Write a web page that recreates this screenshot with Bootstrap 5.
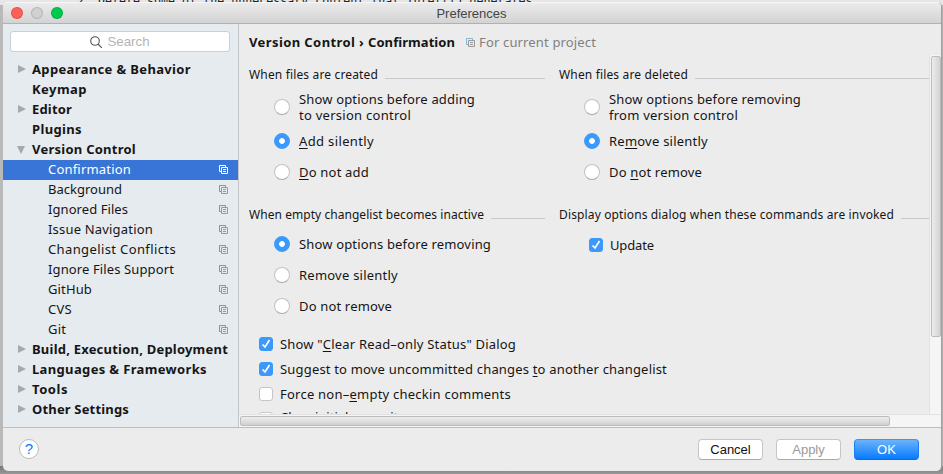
<!DOCTYPE html>
<html lang="en">
<head>
<meta charset="utf-8">
<title>Preferences</title>
<link href="https://cdn.jsdelivr.net/npm/bootstrap@5.3.0/dist/css/bootstrap.min.css" rel="stylesheet">
<style>
body{width:943px;height:474px;overflow:hidden;background:#b4b4b4;color:#151515;font:13px/16px "Noto Sans",sans-serif}
.backdrop{position:absolute;inset:0;overflow:hidden;background:linear-gradient(90deg,#b9b9b9 0 940px,#b0b0b0 940px)}
.backdrop .code{height:12px;margin-top:-7px;padding-left:77px;background:#e6e6e6;font:11.650px/16px "DejaVu Sans Mono",monospace;color:#222;white-space:pre}
.backdrop .foot{position:absolute;left:0;right:0;bottom:0;height:8px;background:linear-gradient(#777,#999)}
.window{position:relative;margin:2px 0 0 3px;width:939px;height:469px;border-radius:5px;background:#ececec;overflow:hidden;border-right:1px solid #a0a0a0}
.titlebar{height:22px;border-bottom:1px solid #b1b1b1;background:linear-gradient(#ebebeb,#d3d3d3);border-top:1px solid #f6f6f6}
.lights{position:absolute;left:8px;top:5px;gap:8px}
.dot{width:12px;height:12px;border-radius:50%;border:1px solid #0002}
.dot.close-dot{background:#ff5f57}
.dot.min-dot{background:#d0d0d0}
.dot.max-dot{background:#00ca4e}
.wintitle{font:13px/21px "Liberation Sans",sans-serif;color:#444;margin-right:1px}
.panes{height:403px}
.side{width:236px;background:#e6ebf0;border-right:1px solid #c2c4c6}
.find{margin:7px 7px 8px;height:21px;width:220px;background:#fff;border:1px solid #cbd0d4;border-radius:3px;font:13.300px/19px "Liberation Sans",sans-serif;color:#b4b4b4;gap:5px}
.tree-row{height:20px;padding-left:29px;padding-bottom:2px;position:relative;white-space:nowrap;line-height:18px}
.tree-row.top{font-weight:700}
.tree-row.sub{padding-left:45px;padding-right:10px}
.tree-row.sel{background:#3875d7;color:#fff}
.tree-row.closed::before,.tree-row.open::before{content:"";position:absolute}
.tree-row.closed::before{left:15px;top:5px;border-left:8px solid #a9a9a9;border-top:4px solid transparent;border-bottom:4px solid transparent}
.tree-row.open::before{left:14px;top:6px;border-top:8px solid #a9a9a9;border-left:4px solid transparent;border-right:4px solid transparent}
.ico{width:9px;height:9px;flex:none;margin-top:1px;--a:#6c9db5;--b:#999}
.sel .ico{--a:#fff;--b:#fff}
.main-pane{width:702px}
.crumb{height:31px;padding:10px 0 0 10px;white-space:nowrap}
.crumb .ico{margin:4px 4px 0 11px;--a:#7fb9d6}
.crumb .note{color:#808080}
.scroller{height:359px;overflow:hidden}
.view{width:690px;height:359px;overflow:hidden;padding:8px 0 0 10px}
.groups{display:grid;grid-template-columns:296px 370px;column-gap:14px;grid-template-rows:140px 128px}
.group-head{height:20px;padding-top:4px;margin-bottom:5px;white-space:nowrap;gap:7px}
.group-head span{font-size:12px}
.rule{height:1px;background:#c9c9c9;margin-top:6px}
.opt{padding-left:25px;gap:9px;height:31px;white-space:nowrap}
.opt.tall{height:37px}
.opt.upd{padding:2px 0 0 30px;gap:7px}
.rad{width:16px;height:16px;border-radius:50%;background:#fff;border:1px solid #c2c2c2;border-bottom-color:#a8a8a8;flex:none}
.rad.on{background:radial-gradient(circle,#fff 0 2.5px,#3b99fc 3.2px);border-color:#3b99fc}
.chk{width:14px;height:14px;border-radius:3px;background:#fff;border:1px solid #c6c6c6;flex:none}
.chk.on{background:#3b99fc;border-color:#3b99fc}
.chk svg{display:block;width:12px;height:12px}
.flags{padding-left:10px}
.flag{height:25px;gap:7px;white-space:nowrap}
.flag:last-child span{padding-bottom:3px}
u{text-underline-offset:2px;text-decoration-thickness:1px;text-decoration-skip-ink:none}
.vbar{width:12px;height:359px;background:#f5f5f5;border-left:1px solid #e2e2e2;padding:1px 0 0 1px}
.vthumb{width:10px;height:281px;border:1px solid #bcbcbc;border-radius:2px;background:linear-gradient(90deg,#ededed,#d2d2d2)}
.hbar{height:13px;background:#f5f5f5;border-top:1px solid #e2e2e2;padding:1px 0 0 1px}
.hthumb{width:650px;height:10px;border:1px solid #bcbcbc;border-radius:2px;background:linear-gradient(#ededed,#d0d0d0)}
.footer{height:44px;border-top:1px solid #bdbdbd;padding:0 22px 1px 16px}
.help{width:20px;height:20px;border-radius:50%;background:#fff;border:1px solid #bbb;color:#0a7bff;font:15px/18px "Liberation Sans",sans-serif}
.pushes{gap:13px}
.push{width:65px;height:21px;padding:0;border:1px solid #c6c6c6;border-bottom-color:#aaa;border-radius:4px;background:#fff;font:13px/19px "Liberation Sans",sans-serif;color:#111}
.push.dim{color:#999}
.push.go{background:linear-gradient(#6bb3fa,#077aff);border-color:#3e93f5 #1a7df0 #0a69e5;color:#fff}
</style>
<script src="https://cdn.jsdelivr.net/npm/bootstrap@5.3.0/dist/js/bootstrap.bundle.min.js"></script>
</head>
<body>
<svg class="d-none"><symbol id="copy" viewBox="0 0 9 9"><path d="M2 6.500H.5v-6h6V2" fill="none" stroke="var(--a)"/><path d="M2.500 2.500h6v6h-6zM4 4.500h3M4 6.500h3" fill="none" stroke="var(--b)"/></symbol>
<symbol id="tick" viewBox="0 0 12 12"><path d="M2.500 6.500 5 9l4.500-7" fill="none" stroke="#fff" stroke-width="1.700"/></symbol></svg>
<div class="backdrop"><div class="code">2. Delete some of the unnecessary content that IntelliJ generates.</div><div class="foot"></div></div>
<div class="window">
<div class="titlebar text-center"><div class="lights d-flex"><i class="dot close-dot"></i><i class="dot min-dot"></i><i class="dot max-dot"></i></div><div class="wintitle">Preferences</div></div>
<div class="panes d-flex">
<nav class="side">
<div class="find d-flex align-items-center justify-content-center"><svg width="12" height="12" viewBox="0 0 12 12" fill="none" stroke="#555" stroke-width="1.100"><circle cx="5" cy="5" r="4.300"/><path d="m8 8 4 4"/></svg><span>Search</span></div>
<div class="tree-row top closed"><span data-w="159">Appearance &amp; Behavior</span></div>
<div class="tree-row top"><span data-w="55">Keymap</span></div>
<div class="tree-row top closed"><span data-w="40">Editor</span></div>
<div class="tree-row top"><span data-w="50">Plugins</span></div>
<div class="tree-row top open"><span data-w="104">Version Control</span></div>
<div class="tree-row sub sel d-flex justify-content-between align-items-center"><span data-w="83">Confirmation</span><svg class="ico"><use href="#copy"/></svg></div>
<div class="tree-row sub d-flex justify-content-between align-items-center"><span data-w="74">Background</span><svg class="ico"><use href="#copy"/></svg></div>
<div class="tree-row sub d-flex justify-content-between align-items-center"><span data-w="80">Ignored Files</span><svg class="ico"><use href="#copy"/></svg></div>
<div class="tree-row sub d-flex justify-content-between align-items-center"><span data-w="105">Issue Navigation</span><svg class="ico"><use href="#copy"/></svg></div>
<div class="tree-row sub d-flex justify-content-between align-items-center"><span data-w="128">Changelist Conflicts</span><svg class="ico"><use href="#copy"/></svg></div>
<div class="tree-row sub d-flex justify-content-between align-items-center"><span data-w="126">Ignore Files Support</span><svg class="ico"><use href="#copy"/></svg></div>
<div class="tree-row sub d-flex justify-content-between align-items-center"><span data-w="44">GitHub</span><svg class="ico"><use href="#copy"/></svg></div>
<div class="tree-row sub d-flex justify-content-between align-items-center"><span data-w="24">CVS</span><svg class="ico"><use href="#copy"/></svg></div>
<div class="tree-row sub d-flex justify-content-between align-items-center"><span data-w="18">Git</span><svg class="ico"><use href="#copy"/></svg></div>
<div class="tree-row top closed"><span data-w="196">Build, Execution, Deployment</span></div>
<div class="tree-row top closed"><span data-w="175">Languages &amp; Frameworks</span></div>
<div class="tree-row top closed"><span data-w="36">Tools</span></div>
<div class="tree-row top closed"><span data-w="97">Other Settings</span></div>
</nav>
<main class="main-pane">
<div class="crumb d-flex"><b><span data-w="119">Version Control › </span><span data-w="87">Confirmation</span></b><svg class="ico"><use href="#copy"/></svg><span class="note" data-w="117">For current project</span></div>
<div class="scroller d-flex">
<div class="view">
<div class="groups">
<section><div class="group-head d-flex align-items-center"><span data-w="129">When files are created</span><div class="rule flex-fill"></div></div>
<div class="opt tall d-flex align-items-center"><i class="rad"></i><div><span data-w="176">Show options before adding</span><br><span data-w="112">to version control</span></div></div>
<div class="opt d-flex align-items-center"><i class="rad on"></i><span data-w="75"><u>A</u>dd silently</span></div>
<div class="opt d-flex align-items-center"><i class="rad"></i><span data-w="70"><u>D</u>o not add</span></div></section>
<section><div class="group-head d-flex align-items-center"><span data-w="129">When files are deleted</span><div class="rule flex-fill"></div></div>
<div class="opt tall d-flex align-items-center"><i class="rad"></i><div><span data-w="192">Show options before removing</span><br><span data-w="129">from version control</span></div></div>
<div class="opt d-flex align-items-center"><i class="rad on"></i><span data-w="99">Re<u>m</u>ove silently</span></div>
<div class="opt d-flex align-items-center"><i class="rad"></i><span data-w="93">Do <u>n</u>ot remove</span></div></section>
<section><div class="group-head d-flex align-items-center"><span data-w="235">When empty changelist becomes inactive</span><div class="rule flex-fill"></div></div>
<div class="opt d-flex align-items-center"><i class="rad on"></i><span data-w="192">Show options before removing</span></div>
<div class="opt d-flex align-items-center"><i class="rad"></i><span data-w="99">Remove silently</span></div>
<div class="opt d-flex align-items-center"><i class="rad"></i><span data-w="93">Do not remove</span></div></section>
<section><div class="group-head d-flex align-items-center"><span data-w="335">Display options dialog when these commands are invoked</span><div class="rule flex-fill"></div></div>
<div class="opt upd d-flex align-items-center"><i class="chk on"><svg><use href="#tick"/></svg></i><span data-w="44">Update</span></div></section>
</div>
<div class="flags">
<div class="flag d-flex align-items-center"><i class="chk on"><svg><use href="#tick"/></svg></i><span data-w="236">Show "<u>C</u>lear Read–only Status" Dialog</span></div>
<div class="flag d-flex align-items-center"><i class="chk on"><svg><use href="#tick"/></svg></i><span data-w="387">Suggest to move uncommitted changes <u>t</u>o another changelist</span></div>
<div class="flag d-flex align-items-center"><i class="chk"></i><span data-w="231">Force non–<u>e</u>mpty checkin comments</span></div>
<div class="flag d-flex align-items-center"><i class="chk"></i><span>Clear initial commit message</span></div>
</div>
</div>
<div class="vbar"><div class="vthumb"></div></div>
</div>
<div class="hbar"><div class="hthumb"></div></div>
</main>
</div>
<footer class="footer d-flex align-items-center"><div class="help text-center me-auto">?</div><div class="pushes d-flex"><button class="btn push">Cancel</button><button class="btn push dim">Apply</button><button class="btn push go">OK</button></div></footer>
</div>
<script>
document.querySelectorAll("[data-w]").forEach(function(el){
  var r=el.getBoundingClientRect().width,n=el.textContent.length;
  el.style.letterSpacing=((+el.dataset.w-r)/n).toFixed(3)+"px";
});
</script>
</body>
</html>
